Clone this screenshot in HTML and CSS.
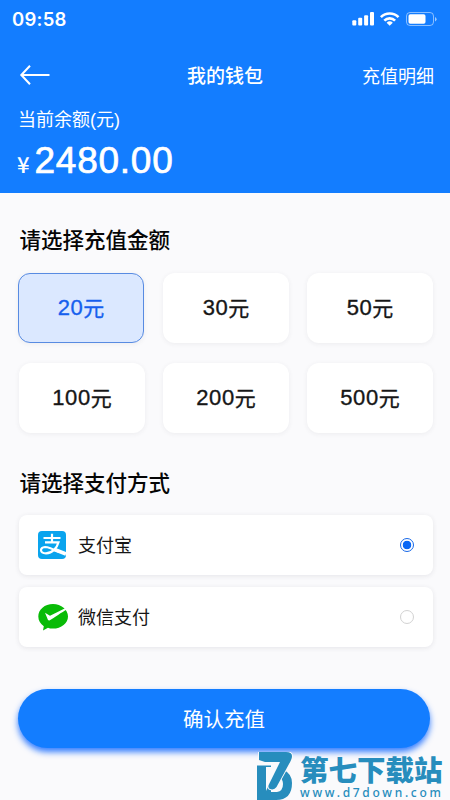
FILE: index.html
```html
<!DOCTYPE html>
<html lang="zh-CN">
<head>
<meta charset="utf-8">
<title>我的钱包</title>
<link rel="stylesheet" href="styles.css">
</head>
<body>
<div class="phone">
  <header class="hero">
    <div class="status">
      <span class="time">09:58</span>
      <svg class="status-icons" width="86" height="16" viewBox="0 0 86 16" fill="#fff">
        <rect x="1.3" y="8.3" width="4" height="5.2" rx="1"/>
        <rect x="7.2" y="5.8" width="4" height="7.7" rx="1"/>
        <rect x="13.1" y="3.2" width="4" height="10.3" rx="1"/>
        <rect x="19" y="0" width="4" height="13.5" rx="1"/>
        <g fill="none" stroke="#fff" stroke-width="2.7">
          <path d="M29.9 5.1a12.6 12.6 0 0 1 17.6 0"/>
          <path d="M33.3 8.6a7.8 7.8 0 0 1 10.8 0"/>
        </g>
        <path d="M35.6 10.7a4.6 4.6 0 0 1 6.2 0l-3.1 3.1z"/>
        <rect x="55.5" y="0.5" width="27" height="13" rx="3.5" fill="none" stroke="#fff" stroke-opacity=".5"/>
        <rect x="57.5" y="2.3" width="17" height="9.4" rx="1.8"/>
        <path d="M84 5v4.5q1.6-.8 1.6-2.2T84 5z" opacity=".6"/>
      </svg>
    </div>
    <nav class="nav">
      <svg class="back" width="32" height="20" viewBox="0 0 32 20" fill="none" stroke="#fff" stroke-width="2"><path d="M11 .8 2.3 10l8.7 9.2M2.5 10H30.5"/></svg>
      <h1 class="title">我的钱包</h1>
      <span class="detail">充值明细</span>
    </nav>
    <div class="label">当前余额(元)</div>
    <div class="balance"><span class="yen">¥</span><span class="amount">2480.00</span></div>
  </header>
  <main class="content">
    <h2 class="heading">请选择充值金额</h2>
    <div class="grid">
      <div class="option selected">20<span class="unit">元</span></div>
      <div class="option">30<span class="unit">元</span></div>
      <div class="option">50<span class="unit">元</span></div>
      <div class="option">100<span class="unit">元</span></div>
      <div class="option">200<span class="unit">元</span></div>
      <div class="option">500<span class="unit">元</span></div>
    </div>
    <h2 class="heading pay-heading">请选择支付方式</h2>
    <div class="methods">
      <div class="method">
        <svg class="icon" width="32" height="30" viewBox="0 0 32 30">
          <rect x="0" y="1" width="28" height="28" rx="4" fill="#0aa4ee"/>
          <g fill="none" stroke="#fff">
            <path stroke-width="2.2" d="M5.5 8h17M14 3.8V12M7 12.3h13.5C19 18 14.5 23 8 23.3 1.5 23.3 1.5 17.3 7 17c4 0 9 2.5 14 5"/>
            <path stroke-width="3.6" d="M16.5 19.5 28 24"/>
          </g>
        </svg>
        <span class="name">支付宝</span><span class="radio on"></span>
      </div>
      <div class="method">
        <svg class="icon" width="32" height="30" viewBox="0 0 32 30">
          <path fill="#09bb07" d="M15 2C6.7 2 .3 7.5.3 14.5c0 4.2 2.2 7.5 5.5 9.7L5 28.5l5-2.7c1.7.6 3 .8 5 .8 8.3 0 15-5.5 15-12.2S23.3 2 15 2z"/>
          <path fill="#fff" d="M7 10.8 12 13.7 28.2 5.8 29 7.4C24 10 16 15.5 11.8 18.3c-.8.5-1.5.2-1.9-.6z"/>
        </svg>
        <span class="name">微信支付</span><span class="radio"></span>
      </div>
    </div>
    <button class="confirm">确认充值</button>
  </main>
  <div class="watermark">
    <svg width="37" height="48" viewBox="0 0 37 48">
      <path fill="#278dbd" d="M0 13.5h14V40h6q6-1 6-8 0-5-4-7l5-7q8 4 8 13 0 17-16 17H0z"/>
      <path fill="#fafafc" d="M9 15h11L9 39z"/>
      <path fill="#278dbd" stroke="#fafafc" stroke-width="1.8" paint-order="stroke" d="M2 0h27q6 0 6 4 0 3-3 8L19.5 35q-2 3-5.5 2.3-4-1-2-5L23 10H8L2 8z"/>
    </svg>
    <div class="mark-text"><span class="mark-name">第七下载站</span><span class="mark-url">www.d7down.com</span></div>
  </div>
</div>
</body>
</html>
```
FILE: styles.css
```css
* { box-sizing: border-box; }
body { margin: 0; font-family: "Liberation Sans", "Noto Sans CJK SC", sans-serif; }
.phone { position: relative; width: 450px; height: 800px; overflow: hidden; background: #fafafc; }
.hero { height: 193px; background: #137dff; color: #fff; }
.status { display: flex; justify-content: space-between; align-items: flex-start; height: 55px; padding: 8px 13px 0 12px; }
.time { font: 600 18.5px/22px Inter, sans-serif; letter-spacing: .25px; }
.status-icons { margin-top: 4px; }
.nav { display: grid; grid-template-columns: 1fr auto 1fr; align-items: center; height: 40px; padding: 0 16px 0 19px; }
.title { margin: 0 3px 0 0; font: 500 19px/40px "Noto Sans CJK SC", sans-serif; }
.detail { justify-self: end; font: 400 18px/40px "Noto Sans CJK SC", sans-serif; }
.label { margin: 11px 0 0 18px; font-size: 18px; line-height: 28px; }
.balance { display: flex; align-items: baseline; height: 50px; padding-left: 17px; line-height: 54px; }
.yen { width: 17.5px; font: 500 22px/54px "Noto Sans CJK SC", sans-serif; }
.amount { font-size: 37px; letter-spacing: .75px; -webkit-text-stroke: .7px #fff; }
.content { padding: 30px 17px 0 19px; }
.heading { margin: 0 0 0 .5px; font: 500 21.5px/32px "Noto Sans CJK SC", sans-serif; color: #050505; }
.grid { display: grid; grid-template-columns: repeat(3, 126px); justify-content: space-between; gap: 20px 0; margin-top: 18px; }
.option { display: flex; align-items: center; justify-content: center; height: 70px; border-radius: 12px; background: #fff; box-shadow: 0 1px 5px rgba(50, 50, 70, .07); color: #161616; font-size: 22px; letter-spacing: .6px; line-height: 70px; -webkit-text-stroke: .35px; }
.unit { margin-bottom: 3px; font: 400 21px/64px "Noto Sans CJK SC", sans-serif; letter-spacing: 0; }
.selected { margin: 0 1px 0 -1px; border: 1px solid #588be2; background: #dbe8ff; color: #155fee; }
.pay-heading { margin-top: 32.5px; }
.methods { display: grid; gap: 12.5px; margin-top: 17px; }
.method { display: flex; align-items: center; height: 60px; padding: 0 19px; border-radius: 8px; background: #fff; box-shadow: 0 1px 5px rgba(50, 50, 70, .1); }
.name { margin: 0 0 2px 8px; color: #161616; font: 400 18px/56px "Noto Sans CJK SC", sans-serif; }
.radio { width: 14px; height: 14px; margin-left: auto; border: 1px solid #d2d2d2; border-radius: 50%; }
.radio.on { border-color: #1768e8; background: radial-gradient(circle, #0967f5 0 4px, #fff 4.6px); }
.confirm { display: block; width: 412px; height: 59px; margin: 42px 0 0 -1px; padding: 0; border: 0; border-radius: 30px; background: #137dff; box-shadow: 0 4px 6px rgba(19, 105, 255, .85); color: #fff; font: 400 20.5px/57px "Noto Sans CJK SC", sans-serif; }
.watermark { position: absolute; left: 257px; top: 752px; display: flex; gap: 6px; color: #278dbd; }
.mark-text { display: flex; flex-direction: column; }
.mark-name { height: 34px; font: 900 28.5px/34px "Noto Sans CJK SC", sans-serif; }
.mark-url { height: 14px; font: 500 12px/14px "Noto Sans", sans-serif; letter-spacing: 2.7px; }
```
